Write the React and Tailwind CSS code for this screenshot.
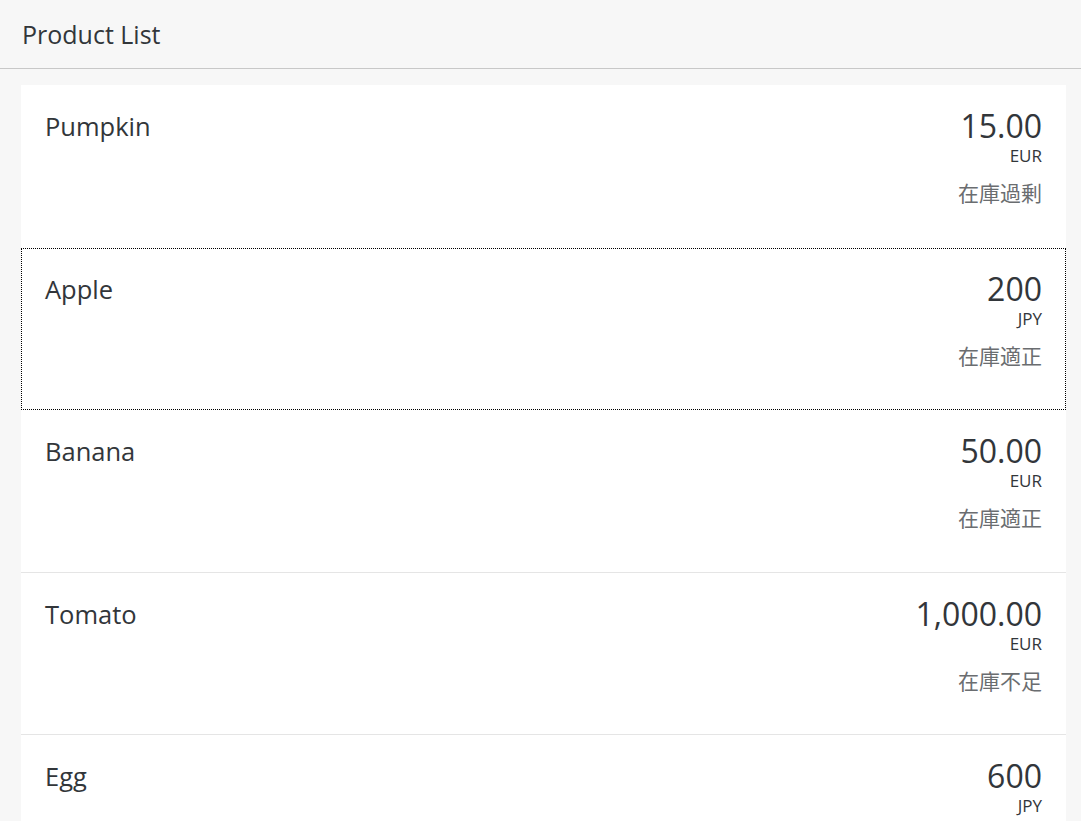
import React from "react";

const items = [
  { name: "Pumpkin", num: "15.00", unit: "EUR", status: "在庫過剰" },
  { name: "Apple", num: "200", unit: "JPY", status: "在庫適正", focused: true },
  { name: "Banana", num: "50.00", unit: "EUR", status: "在庫適正" },
  { name: "Tomato", num: "1,000.00", unit: "EUR", status: "在庫不足" },
  { name: "Egg", num: "600", unit: "JPY", status: "在庫過剰" },
];

const font = { fontFamily: '"Open Sans", "Noto Sans CJK JP", sans-serif' };

export default function App() {
  return (
    <div className="h-[821px] overflow-hidden bg-[#f7f7f7] text-[#32363a]" style={font}>
      <header className="h-[69px] border-b border-[#c8c8c8] bg-[#f7f7f7] px-[22px] pt-[17px]">
        <h1 className="text-[25px] leading-[34px] text-[#32363a]">Product List</h1>
      </header>
      <div className="pt-[16px] pl-[21px] pr-[15px]">
        <ul className="bg-white">
          {items.map((it, i) => (
            <li
              key={i}
              className={
                "h-[162.5px] px-[24px] pt-[21px] flex justify-between items-start " +
                (it.focused
                  ? "outline outline-1 outline-dotted outline-black -outline-offset-1"
                  : i < items.length - 1 && !items[i + 1]?.focused
                  ? "border-b border-[#e5e5e5]"
                  : "")
              }
            >
              <div className="text-[25.5px] leading-[34px] mt-[3px]">{it.name}</div>
              <div className="flex flex-col items-end">
                <div className="text-[32px] leading-[38px] mt-[1px]">{it.num}</div>
                <div className="text-[17px] leading-[20px] mt-[1px]">{it.unit}</div>
                <div className="text-[21px] leading-[24px] mt-[15px] text-[#6a6d70]">{it.status}</div>
              </div>
            </li>
          ))}
        </ul>
      </div>
    </div>
  );
}
